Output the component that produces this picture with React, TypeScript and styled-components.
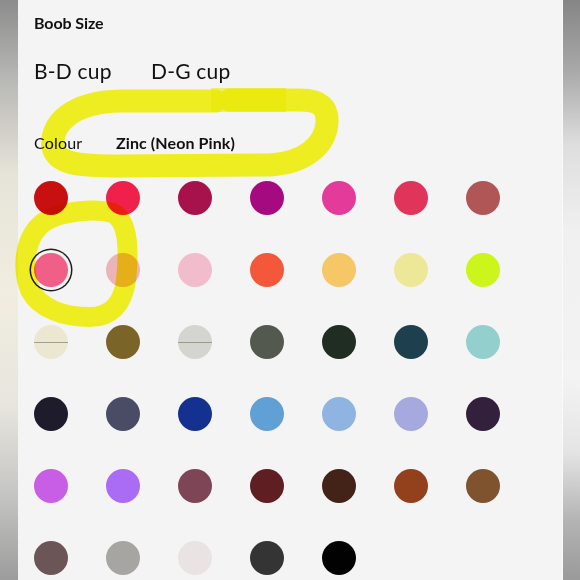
import React from "react";
import styled, { createGlobalStyle } from "styled-components";

const Global = createGlobalStyle`
  html, body { margin: 0; padding: 0; background: #f4f4f4; }
  body { font-family: "Lato", "Noto Sans", sans-serif; color: #111; }
`;

const Page = styled.div`
  position: relative;
  display: flex;
  width: 580px;
  height: 580px;
  overflow: hidden;
`;

const LeftStrip = styled.div`
  width: 18px;
  flex: none;
  background: linear-gradient(180deg, #8c8c8c 0%, #b9b9b6 14%, #e6e3d8 30%, #f1ede0 50%, #e7e5de 70%, #c3c3c1 86%, #9c9c9c 100%);
`;

const RightStrip = styled.div`
  width: 17px;
  flex: none;
  border-left: 1px solid #fafafa;
  background: linear-gradient(180deg, #858585 0%, #a8a8a8 12%, #dedede 25%, #f0f0f0 40%, #f3f3f3 65%, #e4e4e4 78%, #b3b3b3 90%, #9a9a9a 100%);
`;

const Panel = styled.div`
  flex: 1;
  background: #f4f4f4;
  padding: 13px 16px 0;
  display: flex;
  flex-direction: column;
`;

const SectionTitle = styled.div`
  font-size: 16px;
  line-height: 20px;
  font-weight: 700;
  letter-spacing: -0.1px;
`;

const SizeRow = styled.div`
  display: flex;
  margin-top: 25px;
`;

const SizeOption = styled.div`
  min-width: 117px;
  font-size: 21px;
  line-height: 26px;
  font-weight: 400;
  letter-spacing: 0.2px;
`;

const ColourRow = styled.div`
  display: flex;
  margin-top: 49px;
  font-size: 16px;
  line-height: 20px;
`;

const ColourLabel = styled.div`
  min-width: 82px;
  font-weight: 400;
  letter-spacing: 0.2px;
`;

const ColourValue = styled.div`
  font-weight: 700;
  letter-spacing: 0.1px;
`;

const Swatches = styled.div`
  margin-top: 28px;
  display: grid;
  grid-template-columns: repeat(7, 34px);
  column-gap: 38px;
  row-gap: 38px;
`;

const Swatch = styled.div<{ $c: string; $selected?: boolean; $line?: boolean }>`
  position: relative;
  width: 34px;
  height: 34px;
  border-radius: 50%;
  background: ${(p) => p.$c};
  box-shadow: ${(p) => (p.$selected ? "0 0 0 3px #f4f4f4, 0 0 0 4.5px #1e1e1e" : "none")};
  &::after {
    content: "";
    display: ${(p) => (p.$line ? "block" : "none")};
    position: absolute;
    left: 0;
    right: 0;
    top: 16.5px;
    height: 1.5px;
    background: rgba(130, 130, 115, 0.7);
  }
`;

const Highlighter = styled.svg`
  position: absolute;
  left: 0;
  top: 0;
  pointer-events: none;
  mix-blend-mode: multiply;
`;

type S = { c: string; selected?: boolean; line?: boolean };

const swatches: S[] = [
  { c: "#c81010" }, { c: "#ef2049" }, { c: "#a8124c" }, { c: "#a60a80" }, { c: "#e43a9a" }, { c: "#e0345a" }, { c: "#b05656" },
  { c: "#ef5f87", selected: true }, { c: "#ecb4b8" }, { c: "#f1bccb" }, { c: "#f4583a" }, { c: "#f6c766" }, { c: "#ede897" }, { c: "#cbf51b" },
  { c: "#ebe7d0", line: true }, { c: "#7a6428" }, { c: "#d4d4d1", line: true }, { c: "#54594f" }, { c: "#1f2d22" }, { c: "#1e3f4d" }, { c: "#93cfcc" },
  { c: "#1d1b2c" }, { c: "#4a4c66" }, { c: "#14318f" }, { c: "#60a0d4" }, { c: "#8fb4e1" }, { c: "#a5a9dd" }, { c: "#33203d" },
  { c: "#c95ee6" }, { c: "#ab6cf5" }, { c: "#7e4556" }, { c: "#5e1e22" }, { c: "#432318" }, { c: "#93401d" }, { c: "#7e532e" },
  { c: "#6b5556" }, { c: "#a7a5a1" }, { c: "#e9e3e3" }, { c: "#343434" }, { c: "#020202" },
];

export default function App() {
  return (
    <>
      <Global />
      <Page>
        <LeftStrip />
        <Panel>
          <SectionTitle>Boob Size</SectionTitle>
          <SizeRow>
            <SizeOption>B-D cup</SizeOption>
            <SizeOption>D-G cup</SizeOption>
          </SizeRow>
          <ColourRow>
            <ColourLabel>Colour</ColourLabel>
            <ColourValue>Zinc (Neon Pink)</ColourValue>
          </ColourRow>
          <Swatches>
            {swatches.map((s, i) => (
              <Swatch key={i} $c={s.c} $selected={s.selected} $line={s.line} />
            ))}
          </Swatches>
        </Panel>
        <RightStrip />
        <Highlighter width="580" height="580" viewBox="0 0 580 580">
          <path
            d="M 215 101 L 120 101 C 72 102 50 124 53 147 C 57 165 82 166 120 166 L 270 165 C 304 163 325 146 327 123 C 328 108 321 100 300 100 L 230 100"
            fill="none"
            stroke="#f7f70a"
            strokeOpacity="0.9"
            strokeWidth="23"
            strokeLinecap="round"
            strokeLinejoin="round"
          />
          <path
            d="M 211 100 L 286 100"
            fill="none"
            stroke="#f2f200"
            strokeOpacity="0.55"
            strokeWidth="24"
            strokeLinecap="butt"
          />
          <path
            d="M 44 222 C 60 211 95 208 113 213 C 129 222 129 252 126 280 C 123 305 110 317 90 317 C 64 317 40 309 30 290 C 21 266 25 236 44 222 Z"
            fill="none"
            stroke="#f7f70a"
            strokeOpacity="0.9"
            strokeWidth="20"
            strokeLinejoin="round"
          />
        </Highlighter>
      </Page>
    </>
  );
}
